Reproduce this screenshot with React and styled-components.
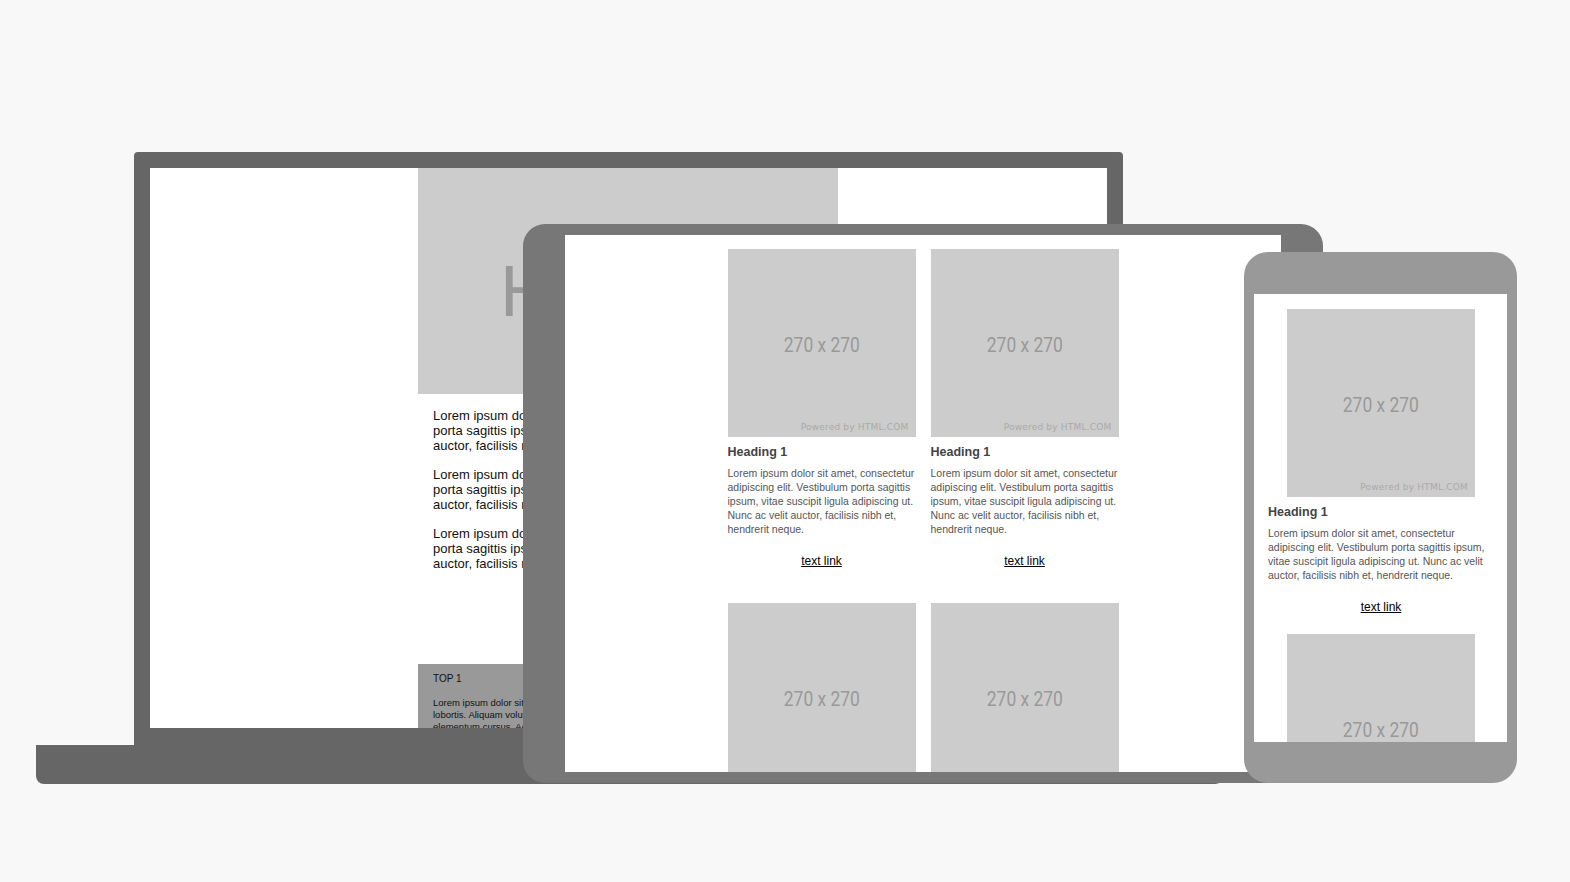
import React from 'react';
import styled, { createGlobalStyle } from 'styled-components';

const GlobalStyle = createGlobalStyle`
    body {
        margin: 0;
        background: #f8f8f8;
        font-family: "Liberation Sans", Arial, sans-serif;
    }
`;

const LOREM = 'Lorem ipsum dolor sit amet, consectetur adipiscing elit. Vestibulum porta sagittis ipsum, vitae suscipit ligula adipiscing ut. Nunc ac velit auctor, facilisis nibh et, hendrerit neque.';

const Stage = styled.div`
    position: relative;
    width: 1570px;
    height: 882px;
    overflow: hidden;
    background: #f8f8f8;
`;

/* laptop */
const Laptop = styled.div`
    position: absolute;
    left: 36px;
    top: 152px;
    width: 1187px;
    display: flex;
    flex-direction: column;
`;

const Lid = styled.div`
    margin-left: 98px;
    width: 989px;
    box-sizing: border-box;
    padding: 16px 16px 17px;
    background: #666;
    border-radius: 4px 4px 0 0;
`;

const LaptopScreen = styled.div`
    height: 560px;
    background: #fff;
    display: grid;
    grid-template-columns: 268px 420px 1fr;
    overflow: hidden;
`;

const MainColumn = styled.div`
    grid-column: 2;
    display: flex;
    flex-direction: column;
    height: 560px;
`;

const Hero = styled.div`
    flex: none;
    height: 226px;
    box-sizing: border-box;
    padding: 20px 0 0 12px;
    background: #ccc;
    display: flex;
    align-items: center;
    justify-content: center;
    color: #999;
    font-size: 72px;
    line-height: 72px;
`;

const Copy = styled.div`
    flex: none;
    height: 270px;
    box-sizing: border-box;
    padding: 14px 14px 0 15px;
`;

const CopyText = styled.p`
    margin: 0 0 14px;
    font-size: 13px;
    line-height: 15px;
    color: #111;
`;

const TopBox = styled.div`
    flex: 1;
    background: #999;
    padding: 9px 14px 0 15px;
    overflow: hidden;
`;

const TopTitle = styled.div`
    font-size: 10px;
    line-height: 12px;
    color: #111;
`;

const TopText = styled.p`
    margin: 12px 0 0;
    font-size: 9.5px;
    line-height: 12px;
    color: #111;
    white-space: nowrap;
`;

const Base = styled.div`
    height: 39px;
    background: #666;
    border-radius: 0 0 8px 8px;
`;

/* tablet */
const Tablet = styled.div`
    position: absolute;
    left: 523px;
    top: 224px;
    width: 800px;
    height: 559px;
    box-sizing: border-box;
    padding: 11px 42px;
    background: #777;
    border-radius: 22px;
`;

const TabletScreen = styled.div`
    height: 100%;
    box-sizing: border-box;
    background: #fff;
    overflow: hidden;
    display: grid;
    grid-template-columns: repeat(2, 188px);
    justify-content: center;
    align-content: start;
    column-gap: 15px;
    row-gap: 35px;
    padding-top: 14px;
`;

/* phone */
const Phone = styled.div`
    position: absolute;
    left: 1244px;
    top: 252px;
    width: 273px;
    height: 531px;
    box-sizing: border-box;
    padding: 42px 10px 41px;
    background: #999;
    border-radius: 24px;
`;

const PhoneScreen = styled.div`
    height: 100%;
    box-sizing: border-box;
    background: #fff;
    overflow: hidden;
    padding: 15px 13px 0 14px;
    display: flex;
    flex-direction: column;
    gap: 20px;
`;

/* card */
const Card = styled.div`
    display: flex;
    flex-direction: column;
`;

const Placeholder = styled.div`
    position: relative;
    flex: none;
    align-self: center;
    width: 188px;
    height: 188px;
    box-sizing: border-box;
    padding-top: 3px;
    background: #ccc;
    display: flex;
    align-items: center;
    justify-content: center;
`;

const Size = styled.span`
    display: inline-block;
    font-family: "Roboto", sans-serif;
    font-size: 21px;
    color: #999;
    transform: scaleX(0.83);
`;

const Powered = styled.span`
    position: absolute;
    right: 7px;
    bottom: 5px;
    font-family: "DejaVu Sans", sans-serif;
    font-size: 9px;
    letter-spacing: 0.2px;
    color: #aaa;
`;

const CardHeading = styled.h3`
    margin: 8px 0 0;
    font-size: 12.5px;
    line-height: 14px;
    font-weight: bold;
    color: #444;
`;

const CardText = styled.p`
    margin: 7px 0 0;
    font-size: 10.5px;
    line-height: 14px;
    color: #555;
`;

const CardLink = styled.a`
    margin-top: 18px;
    align-self: center;
    font-size: 12px;
    line-height: 14px;
    color: #000;
    text-decoration: underline;
`;

const ProductCard = () => (
    <Card>
        <Placeholder>
            <Size>270 x 270</Size>
            <Powered>Powered by HTML.COM</Powered>
        </Placeholder>
        <CardHeading>Heading 1</CardHeading>
        <CardText>{LOREM}</CardText>
        <CardLink href="#">text link</CardLink>
    </Card>
);

const App = () => (
    <Stage>
        <GlobalStyle />
        <Laptop>
            <Lid>
                <LaptopScreen>
                    <MainColumn>
                        <Hero>Heading</Hero>
                        <Copy>
                            <CopyText>{LOREM}</CopyText>
                            <CopyText>{LOREM}</CopyText>
                            <CopyText>{LOREM}</CopyText>
                        </Copy>
                        <TopBox>
                            <TopTitle>TOP 1</TopTitle>
                            <TopText>
                                Lorem ipsum dolor sit amet, consectetur adipiscing elit. Mauris ut tellus vel nisl
                                <br />
                                lobortis. Aliquam volutpat, nisi quis tincidunt pretium, nunc lorem tristique
                                <br />
                                elementum cursus. Aenean non lorem sed mi tempor faucibus.
                            </TopText>
                        </TopBox>
                    </MainColumn>
                </LaptopScreen>
            </Lid>
            <Base />
        </Laptop>
        <Tablet>
            <TabletScreen>
                {[0, 1, 2, 3].map((i) => <ProductCard key={i} />)}
            </TabletScreen>
        </Tablet>
        <Phone>
            <PhoneScreen>
                <ProductCard />
                <ProductCard />
            </PhoneScreen>
        </Phone>
    </Stage>
);

export default App;
